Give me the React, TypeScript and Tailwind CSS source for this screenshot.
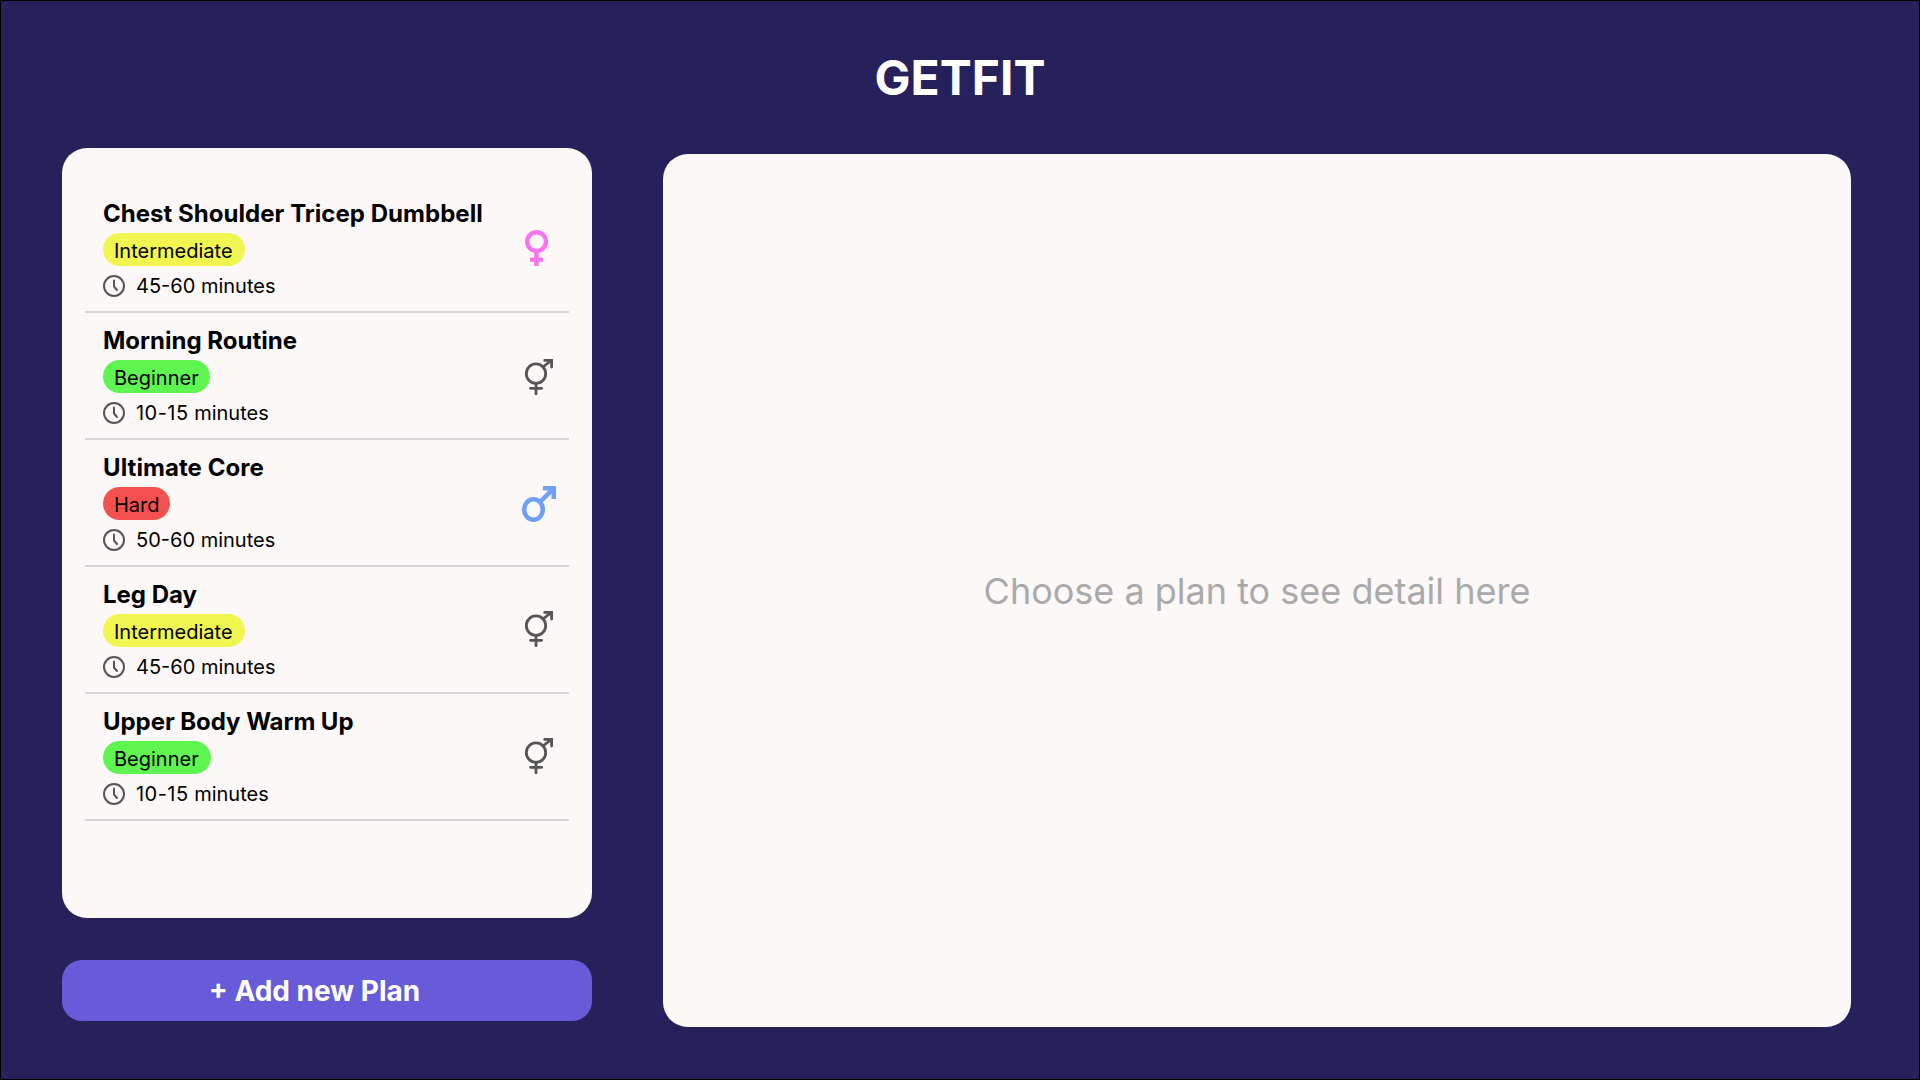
type Gender = "female" | "male" | "both";
type Level = "Beginner" | "Intermediate" | "Hard";

interface Plan {
  name: string;
  nameSpacing: string;
  level: Level;
  minutes: string;
  minutesSpacing: string;
  gender: Gender;
  pill: string;
  iconTop: string;
}

const plans: Plan[] = [
  { name: "Chest Shoulder Tricep Dumbbell", nameSpacing: "tracking-[0.035px]", level: "Intermediate", minutes: "45-60", minutesSpacing: "tracking-normal", gender: "female", pill: "w-[142px] bg-[#f1f550]", iconTop: "mt-[44px]" },
  { name: "Morning Routine", nameSpacing: "tracking-normal", level: "Beginner", minutes: "10-15", minutesSpacing: "tracking-[0.45px]", gender: "both", pill: "w-[107px] bg-[#5ff550]", iconTop: "mt-[46px]" },
  { name: "Ultimate Core", nameSpacing: "tracking-[0.06px]", level: "Hard", minutes: "50-60", minutesSpacing: "tracking-normal", gender: "male", pill: "w-[67px] bg-[#f55050]", iconTop: "mt-[46px]" },
  { name: "Leg Day", nameSpacing: "tracking-normal", level: "Intermediate", minutes: "45-60", minutesSpacing: "tracking-normal", gender: "both", pill: "w-[142px] bg-[#f1f550]", iconTop: "mt-[44px]" },
  { name: "Upper Body Warm Up", nameSpacing: "tracking-[-0.05px]", level: "Beginner", minutes: "10-15", minutesSpacing: "tracking-[0.45px]", gender: "both", pill: "w-[108px] bg-[#5ff550]", iconTop: "mt-[44px]" },
];

function ClockIcon() {
  return (
    <svg className="h-[22px] w-[22px] shrink-0" viewBox="0 0 22 22" fill="none" stroke="#555" strokeWidth="2">
      <circle cx="11" cy="11" r="10" />
      <path d="M11 5.5V11.5L14 15" strokeLinecap="round" strokeLinejoin="round" />
    </svg>
  );
}

function GenderIcon({ gender }: { gender: Gender }) {
  if (gender === "female") {
    return (
      <svg className="h-9 w-9" viewBox="0 0 36 36" fill="none" stroke="#f774ec" strokeWidth="4.4">
        <circle cx="14.6" cy="11.6" r="9.4" />
        <path d="M14.5 21V36M8 29.6H21" />
      </svg>
    );
  }
  if (gender === "male") {
    return (
      <svg className="h-9 w-9" viewBox="0 0 36 36" fill="none" stroke="#6e9ffa" strokeWidth="4.5">
        <ellipse cx="11.5" cy="23.5" rx="9.3" ry="10.2" />
        <path d="M18.5 15.5L31 3M21 2.2H31.8V13" />
      </svg>
    );
  }
  return (
    <svg className="h-9 w-9" viewBox="0 0 36 36" fill="none" stroke="#555" strokeWidth="2.8">
      <circle cx="14" cy="14.6" r="9.7" />
      <path d="M14 24.5V34.8M8.5 29.3H19.7M21 8L29 1.7M22.7 1.4H29.6V8" strokeLinecap="round" />
    </svg>
  );
}

function PlanRow({ plan }: { plan: Plan }) {
  return (
    <li className="flex h-[127px] justify-between border-b-2 border-[#d7d5d5] pl-[18px] pr-[11px]">
      <div className="flex flex-col items-start pt-[13px]">
        <h2 className={`h-[29px] whitespace-nowrap text-2xl leading-[29px] font-bold ${plan.nameSpacing}`}>{plan.name}</h2>
        <span className={`mt-[5px] h-[33px] rounded-full pl-[11px] pt-px text-xl leading-[34px] ${plan.pill}`}>{plan.level}</span>
        <div className="mt-[9px] flex h-[22px] items-center gap-[11px]">
          <ClockIcon />
          <span className="text-xl leading-[22px]">
            <span className={plan.minutesSpacing}>{plan.minutes}</span> minutes
          </span>
        </div>
      </div>
      <div className={plan.iconTop}>
        <GenderIcon gender={plan.gender} />
      </div>
    </li>
  );
}

export default function App() {
  return (
    <div className="flex h-[1080px] w-[1920px] flex-col overflow-hidden border border-black bg-[#26205b] font-['Inter',sans-serif] text-black">
      <header className="flex h-[147px] shrink-0 justify-center pt-12">
        <h1 className="text-5xl leading-[58px] font-bold text-white">GETFIT</h1>
      </header>
      <main className="flex items-start gap-[71px] pl-[61px]">
        <section className="flex w-[530px] flex-col gap-[42px]">
          <ul className="h-[770px] rounded-[25px] bg-[#fcf8f7] px-[23px] pt-[38px]">
            {plans.map((plan) => (
              <PlanRow key={plan.name} plan={plan} />
            ))}
          </ul>
          <button className="h-[61px] rounded-[20px] bg-[#675bda] pr-[25px] text-[28px] font-bold text-white">+ Add new Plan</button>
        </section>
        <section className="mt-[6px] flex h-[873px] w-[1188px] items-center justify-center rounded-[25px] bg-[#fcf8f7]">
          <p className="text-4xl text-[#aaa]">Choose a plan to see detail here</p>
        </section>
      </main>
    </div>
  );
}
